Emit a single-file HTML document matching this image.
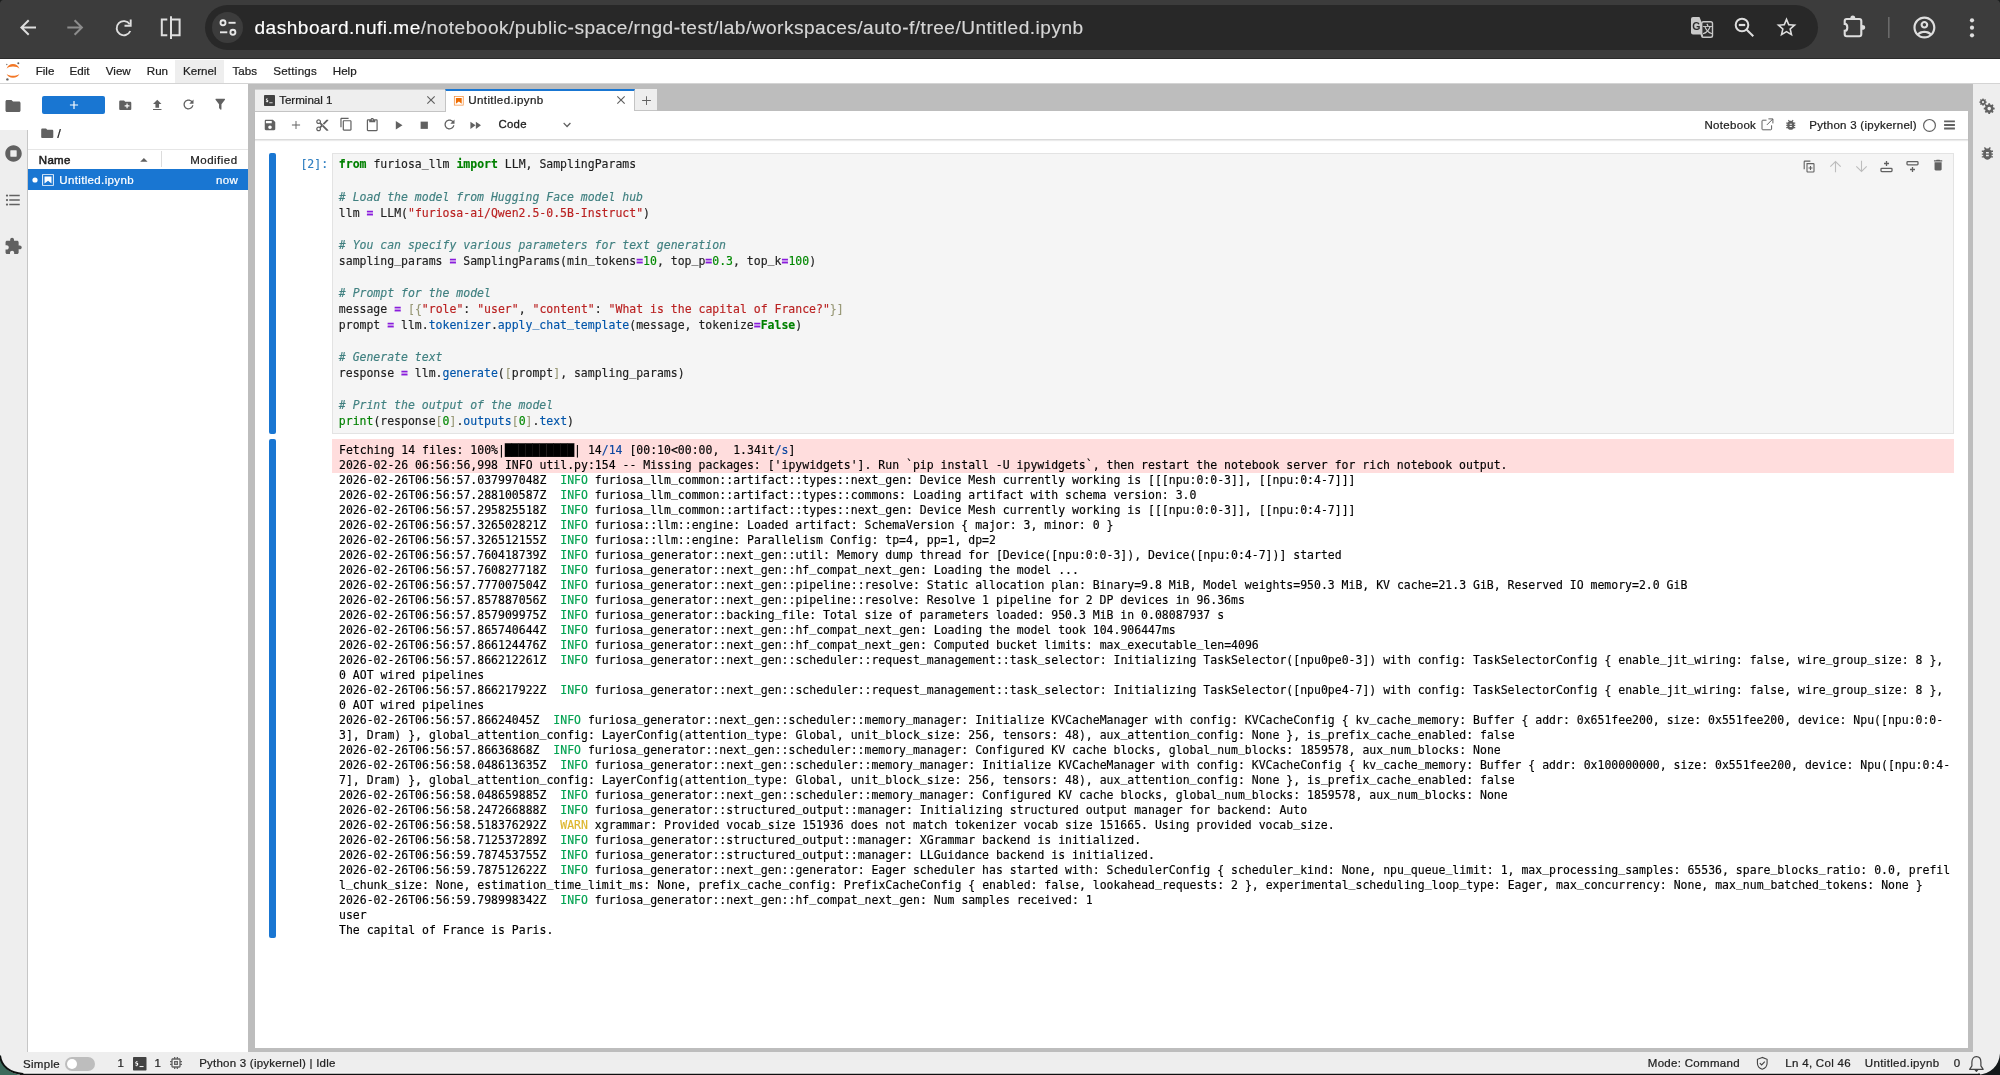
<!DOCTYPE html>
<html lang="en">
<head>
<meta charset="utf-8">
<title>Untitled.ipynb - JupyterLab</title>
<style>
*{box-sizing:border-box;margin:0;padding:0}
html,body{width:2000px;height:1075px;overflow:hidden;background:#fff}
body{position:relative;font-family:"Liberation Sans",sans-serif;font-size:11.5px;color:#212121}
#root{position:absolute;left:0;top:0;width:2000px;height:1075px;will-change:transform}
.abs{position:absolute}
svg{display:block;position:absolute;overflow:visible}
.t{position:absolute;white-space:nowrap;line-height:14px;-webkit-text-stroke:.22px}
/* chrome */
#chrome{left:0;top:0;width:2000px;height:58px;background:#3c3c3c}
#chromeline{left:0;top:58px;width:2000px;height:1px;background:#2b2b2b}
#pill{left:205px;top:5px;width:1613px;height:45px;border-radius:23px;background:#282828}
#site{left:212px;top:12px;width:31px;height:31px;border-radius:16px;background:#3c3c3c}
#url{left:254.5px;top:16px;font-size:19.1px;line-height:24px;color:#d6d6d6;letter-spacing:.48px}
#url b{font-weight:normal;color:#fff}
#url{-webkit-text-stroke:.15px}
/* menubar */
#menubar{left:0;top:59px;width:2000px;height:25px;background:#fff;border-bottom:1px solid #d4d4d4}
.mi{position:absolute;top:64px;font-size:11.6px;line-height:14px;color:#212121;white-space:nowrap;-webkit-text-stroke:.22px}
#kernelhl{left:175px;top:60px;width:49px;height:23px;background:#eee}
/* left sidebar */
#lsb{left:0;top:84px;width:28px;height:968px;background:#eee;border-right:1px solid #c6c6c6}
#lsbact{left:0;top:84px;width:28px;height:46px;background:#fff}
/* file browser */
#fb{left:28px;top:84px;width:220px;height:968px;background:#fff}
#newbtn{left:42px;top:96px;width:63px;height:18px;border-radius:2px;background:#1976d2}
#fbhead{left:28px;top:149px;width:220px;height:20px;border-top:1px solid #e6e6e6}
#fbdiv{left:161px;top:151px;width:1px;height:16px;background:#dcdcdc}
#fbsel{left:28px;top:169px;width:220px;height:21px;background:#1976d2}
/* dock */
#dock{left:248px;top:84px;width:1725px;height:968px;background:#bdbdbd}
#tab1{left:255px;top:89px;width:191px;height:23px;background:#eee;border:1px solid #c4c4c4;border-left:none;border-top-color:#cfcfcf}
#tab2{left:445px;top:89px;width:190px;height:22px;background:#fff;border-top:2px solid #1976d2;border-right:1px solid #c4c4c4;border-left:1px solid #c4c4c4}
#tabadd{left:635px;top:89px;width:22px;height:22px;background:#eee;border-bottom:1px solid #c4c4c4}
#nbpanel{left:255px;top:111px;width:1713px;height:937px;background:#fff}
#tab1under{left:255px;top:111px;width:190px;height:1px;background:#c4c4c4}
#nbtoolbar{left:255px;top:112px;width:1713px;height:28px;background:#fff;border-bottom:1px solid #dadada;box-shadow:0 1px 1px rgba(0,0,0,.08)}
/* right sidebar */
#rsb{left:1973px;top:84px;width:27px;height:968px;background:#eee}
/* status bar */
#status{left:0;top:1052px;width:2000px;height:23px;background:#eee}
/* cell */
.bar{position:absolute;left:269px;width:7px;background:#1976d2;border-radius:2px}
#editor{left:332px;top:153px;width:1622px;height:281px;background:#f5f5f5;border:1px solid #e3e3e3}
#stderr{left:332px;top:439px;width:1622px;height:34px;background:#fdd}
pre{font-family:"DejaVu Sans Mono","Liberation Mono",monospace;font-size:11.49px;-webkit-text-stroke:.15px;position:absolute;white-space:pre;color:#212121;margin:0}
#code{left:338.8px;top:156.4px;line-height:16.06px}
#out{left:339px;top:442.9px;line-height:15px;color:#000}
#prompt{left:300.4px;top:156.4px;line-height:16.06px;color:#307fc1}
.u{position:relative;top:-1.6px}
.k{color:#008000;font-weight:bold}.c{color:#408080;font-style:italic}.s{color:#ba2121}.n{color:#080}
.o{color:#8a1cdc;font-weight:bold}.p{color:#05a}.b{color:#997}.bi{color:#008000}
.gi{color:#00a250}.gw{color:#ddb62b}.lk{color:#0d47a1}
</style>
</head>
<body>
<div id="root">
<!-- ===== Browser chrome ===== -->
<div class="abs" id="chrome"></div>
<div class="abs" id="chromeline"></div>
<div class="abs" id="pill"></div>
<div class="abs" id="site"></div>
<div class="t" id="url"><b>dashboard.nufi.me</b>/notebook/public-space/rngd-test/lab/workspaces/auto-f/tree/Untitled.ipynb</div>
<svg id="chromesvg" style="left:0;top:0" width="2000" height="58" viewBox="0 0 2000 58">
<g fill="#dedede">
<!-- back -->
<path transform="translate(16 15.5)" d="M20 11H7.830l5.590-5.590L12 4l-8 8 8 8 1.410-1.410L7.830 13H20v-2z"/>
<!-- forward (dim) -->
<path transform="translate(63.3 15.500)" fill="#8d8d8d" d="M12 4l-1.410 1.410L16.170 11H4v2h12.170l-5.580 5.590L12 20l8-8z"/>
<!-- reload -->
<g fill="none" stroke="#dedede" stroke-width="1.900"><path d="M129.700 24.300A7.100 7.100 0 1 0 130.300 31"/><path d="M130.700 19.500V25.700H124.500"/></g>
<!-- star -->
<path transform="translate(1774.500 15.300)" d="M22 9.240l-7.190-.62L12 2 9.190 8.630 2 9.240l5.460 4.730L5.820 21 12 17.270 18.180 21l-1.630-7.030L22 9.240zM12 15.400l-3.760 2.270 1-4.280-3.320-2.880 4.380-.38L12 6.100l1.710 4.040 4.380.38-3.320 2.880 1 4.280L12 15.400z"/>
<!-- extensions puzzle -->
<path fill="none" stroke="#dedede" stroke-width="2.100" d="M1846.700 19H1859.300a2 2 0 0 1 2 2V34.200a2 2 0 0 1-2 2H1846.700a2 2 0 0 1-2-2V30.900a2.600 3.500 0 0 0 0-7V21a2 2 0 0 1 2-2z"/>
<path d="M1850.300 18.400a2.500 3 0 0 1 5 0zM1862 25a3.200 2.400 0 0 1 0 4.800z"/>
<!-- profile -->
<path transform="translate(1911.200 14.300) scale(1.1)" d="M12 2C6.480 2 2 6.480 2 12s4.480 10 10 10 10-4.480 10-10S17.520 2 12 2zM7.350 18.500C8.660 17.560 10.260 17 12 17s3.340.56 4.650 1.500C15.340 19.440 13.740 20 12 20s-3.340-.56-4.650-1.500zm10.790-1.380C16.450 15.800 14.320 15 12 15s-4.450.8-6.140 2.120C4.700 15.730 4 13.950 4 12c0-4.420 3.580-8 8-8s8 3.580 8 8c0 1.950-.7 3.730-1.860 5.120zM12 6c-1.930 0-3.500 1.570-3.500 3.500S10.070 13 12 13s3.500-1.570 3.500-3.500S13.930 6 12 6zm0 5c-.83 0-1.500-.67-1.500-1.500S11.170 8 12 8s1.500.67 1.500 1.500S12.830 11 12 11z"/>
<!-- dots -->
<circle cx="1972" cy="20.300" r="2.100"/><circle cx="1972" cy="27.700" r="2.100"/><circle cx="1972" cy="35.300" r="2.100"/>
</g>
<path d="M0 0h3.200C1.400.3.300 1.400 0 3.200z" fill="#1b1d1c"/><path d="M2000 0h-3.200c1.800.3 2.900 1.400 3.200 3.200z" fill="#1b1d1c"/>
<!-- separator -->
<rect x="1888" y="17" width="1.600" height="21" fill="#6a6a6a"/>
<!-- split view -->
<g fill="none" stroke="#dedede" stroke-width="2">
<path d="M167.300 19.600H161.800V35.200H167.300"/>
<path d="M171 19.600H179.600V35.200H171"/>
<path d="M171 16.200V39"/>
</g>
<!-- site info (tune) -->
<g fill="none" stroke="#e6e6e6" stroke-width="1.900">
<circle cx="223" cy="22.800" r="2.500"/><path d="M228.500 22.800H235.600"/>
<circle cx="232.900" cy="32.300" r="2.500"/><path d="M220 32.300H227.300"/>
</g>
<!-- zoom out -->
<g fill="none" stroke="#dedede" stroke-width="2">
<circle cx="1742" cy="25" r="6.300"/><path d="M1746.700 29.700L1753.300 36.300"/><path d="M1738.800 25H1745.200" stroke-width="2.200"/>
</g>
<!-- translate -->
<g>
<path d="M1693 17h6.500l2 5v12.500h-8.500a2 2 0 0 1-2-2V19a2 2 0 0 1 2-2z" fill="#c9c9c9"/>
<rect x="1701.700" y="21.700" width="10.800" height="15.600" rx="1.800" fill="#2f2f2f" stroke="#c9c9c9" stroke-width="1.400"/>
<path d="M1700 34.500l3 3.500v-3.500z" fill="#c9c9c9"/>
</g>
</svg>
<div class="t" style="left:1692.300px;top:19.800px;font-size:10.500px;line-height:13px;font-weight:bold;color:#2b2b2b;-webkit-text-stroke:0">G</div>
<div class="t" style="left:1702.500px;top:22.500px;font-size:10px;line-height:13px;color:#dedede;font-family:'Liberation Sans','Noto Sans CJK SC',sans-serif">文</div>


<!-- ===== Menu bar ===== -->
<div class="abs" id="menubar"></div>
<div class="abs" id="kernelhl"></div>
<div class="mi" style="left:35.700px">File</div>
<div class="mi" style="left:69.500px">Edit</div>
<div class="mi" style="left:105.800px">View</div>
<div class="mi" style="left:146.800px">Run</div>
<div class="mi" style="left:183px">Kernel</div>
<div class="mi" style="left:232.500px">Tabs</div>
<div class="mi" style="left:273.200px;letter-spacing:.25px">Settings</div>
<div class="mi" style="left:332.800px">Help</div>
<svg style="left:4px;top:61px" width="18" height="21" viewBox="0 0 18 21">
<path d="M2.600 7.700C3.400 4.800 6 3 9 3s5.600 1.800 6.400 4.700C14.200 6.300 11.800 5.500 9 5.500S3.800 6.300 2.600 7.700z" fill="#f37726"/>
<path d="M2.600 12.700C3.400 15.100 6 16.700 9 16.700s5.600-1.600 6.400-4C14.200 14 11.800 14.800 9 14.800S3.800 14 2.600 12.700z" fill="#f37726"/>
<circle cx="14.300" cy="2.300" r="1" fill="#616161"/><circle cx="2.800" cy="3.500" r=".7" fill="#767677"/><circle cx="3.400" cy="18.400" r="1.200" fill="#616161"/>
</svg>


<!-- ===== Left sidebar ===== -->
<div class="abs" id="lsb"></div>
<div class="abs" id="lsbact"></div>
<svg style="left:4px;top:96.500px" width="18" height="18" viewBox="0 0 24 24"><path fill="#616161" d="M10 4H4c-1.100 0-1.990.9-1.990 2L2 18c0 1.100.9 2 2 2h16c1.100 0 2-.9 2-2V8c0-1.100-.9-2-2-2h-8l-2-2z"/></svg>
<svg style="left:4.500px;top:145px" width="17" height="17" viewBox="0 0 512 512"><path fill="#616161" d="M256 8C119 8 8 119 8 256s111 248 248 248 248-111 248-248S393 8 256 8zm96 328c0 8.800-7.200 16-16 16H176c-8.800 0-16-7.200-16-16V176c0-8.800 7.200-16 16-16h160c8.800 0 16 7.200 16 16v160z"/></svg>
<svg style="left:4px;top:191px" width="18" height="18" viewBox="0 0 24 24"><path fill="#616161" d="M7,5H21V7H7V5M7,13V11H21V13H7M4,4.500A1.500,1.500 0 0,1 5.500,6A1.500,1.500 0 0,1 4,7.500A1.500,1.500 0 0,1 2.500,6A1.500,1.500 0 0,1 4,4.500M4,10.500A1.500,1.500 0 0,1 5.500,12A1.500,1.500 0 0,1 4,13.500A1.500,1.500 0 0,1 2.500,12A1.500,1.500 0 0,1 4,10.500M7,19V17H21V19H7M4,16.500A1.500,1.500 0 0,1 5.500,18A1.500,1.500 0 0,1 4,19.500A1.500,1.500 0 0,1 2.500,18A1.500,1.500 0 0,1 4,16.500Z"/></svg>
<svg style="left:3.500px;top:237px" width="18.500" height="18.500" viewBox="0 0 24 24"><path fill="#616161" d="M20.500 11H19V7c0-1.100-.9-2-2-2h-4V3.500C13 2.120 11.880 1 10.500 1S8 2.120 8 3.500V5H4c-1.100 0-1.990.9-1.990 2v3.800H3.500c1.490 0 2.700 1.210 2.700 2.700s-1.210 2.700-2.700 2.700H2V20c0 1.100.9 2 2 2h3.800v-1.500c0-1.490 1.210-2.700 2.700-2.700 1.490 0 2.700 1.210 2.700 2.700V22H17c1.100 0 2-.9 2-2v-4h1.500c1.380 0 2.500-1.120 2.500-2.500S21.880 11 20.500 11z"/></svg>


<!-- ===== File browser ===== -->
<div class="abs" id="fb"></div>
<div class="abs" id="newbtn"></div>
<div class="abs" id="fbhead"></div>
<div class="abs" id="fbdiv"></div>
<div class="abs" id="fbsel"></div>
<svg style="left:66.500px;top:98px" width="14" height="14" viewBox="0 0 24 24"><path fill="#fff" d="M19 13h-6v6h-2v-6H5v-2h6V5h2v6h6v2z"/></svg>
<svg style="left:117.500px;top:97.500px" width="14.500" height="14.500" viewBox="0 0 24 24"><path fill="#616161" d="M20 6h-8l-2-2H4c-1.110 0-1.990.89-1.990 2L2 18c0 1.110.89 2 2 2h16c1.110 0 2-.89 2-2V8c0-1.110-.89-2-2-2zm-1 8h-3v3h-2v-3h-3v-2h3V9h2v3h3v2z"/></svg>
<svg style="left:149.500px;top:97.500px" width="14.500" height="14.500" viewBox="0 0 24 24"><path fill="#616161" d="M9 16h6v-6h4l-7-7-7 7h4zm-4 2h14v2H5z"/></svg>
<svg style="left:181.200px;top:97px" width="15" height="15" viewBox="0 0 18 18"><path fill="#616161" d="M9 13.500c-2.490 0-4.500-2.010-4.500-4.500S6.510 4.500 9 4.500c1.240 0 2.360.52 3.170 1.330L10 8h5V3l-1.760 1.760C12.150 3.680 10.660 3 9 3 5.690 3 3.010 5.690 3.010 9S5.690 15 9 15c2.970 0 5.430-2.160 5.900-5h-1.520c-.46 2-2.240 3.500-4.380 3.500z"/></svg>
<svg style="left:213px;top:97.300px" width="14.500" height="14.500" viewBox="0 0 24 24"><path fill="#616161" d="M14,12V19.880C14.040,20.180 13.940,20.500 13.710,20.710C13.320,21.100 12.690,21.100 12.300,20.710L10.290,18.700C10.060,18.470 9.960,18.160 10,17.870V12H9.970L4.210,4.620C3.870,4.190 3.950,3.560 4.380,3.220C4.570,3.080 4.780,3 5,3V3H19V3C19.220,3 19.430,3.080 19.620,3.220C20.050,3.560 20.130,4.190 19.790,4.620L14.030,12H14Z"/></svg>
<svg style="left:40px;top:126px" width="14.500" height="14.500" viewBox="0 0 24 24"><path fill="#616161" d="M10 4H4c-1.100 0-1.990.9-1.990 2L2 18c0 1.100.9 2 2 2h16c1.100 0 2-.9 2-2V8c0-1.100-.9-2-2-2h-8l-2-2z"/></svg>
<div class="t" style="left:57.300px;top:127px;font-size:13px">/</div>
<div class="t" id="fbname" style="left:38.800px;top:152.500px;font-size:11.500px;letter-spacing:.28px;-webkit-text-stroke:.5px">Name</div>
<div class="t" id="fbmod" style="left:190.200px;top:152.500px;font-size:11.500px;letter-spacing:.5px">Modified</div>
<svg style="left:138px;top:155px" width="12" height="10" viewBox="0 0 12 10"><path fill="#616161" d="M2.200 6.700h7.400L5.900 2.900z"/></svg>
<svg style="left:31.600px;top:177px" width="6" height="6" viewBox="0 0 6 6"><circle cx="3" cy="3" r="2.600" fill="#fff"/></svg>
<svg style="left:40.500px;top:173px" width="14" height="14" viewBox="0 0 22 22"><g fill="#fff"><path d="M18.700 3.300v15.400H3.300V3.300h15.400m1.500-1.500H1.800v18.300h18.300l.1-18.300z"/><path d="M16.500 16.500l-5.400-4.300-5.600 4.300v-11h11z"/></g></svg>
<div class="t" id="fbfile" style="left:59.300px;top:172.800px;font-size:11.500px;color:#fff;letter-spacing:.35px">Untitled.ipynb</div>
<div class="t" id="fbnow" style="left:216px;top:172.800px;font-size:11.500px;color:#fff;letter-spacing:.3px">now</div>


<!-- ===== Dock / notebook ===== -->
<div class="abs" id="dock"></div>
<div class="abs" id="nbpanel"></div>
<div class="abs" id="tab1"></div>
<div class="abs" id="tab2"></div>
<div class="abs" id="tabadd"></div>
<div class="abs" id="nbtoolbar"></div>
<svg style="left:263.500px;top:95.300px" width="11" height="11" viewBox="0 0 11 11"><rect x="0" y="0" width="11" height="11" rx=".8" fill="#424242"/><path d="M2.600 3.200h1.100v.6h-.9v.9h.9c.3 0 .5.200.5.500v1.200c0 .3-.2.500-.5.500h-.3v.6h-.6v-.6h-.9v-.6h1.400v-.9h-.9c-.3 0-.5-.2-.5-.5V4.300c0-.3.200-.5.500-.5h.2z" fill="#fff"/><rect x="5.300" y="7.400" width="3.300" height=".8" fill="#fff"/></svg>
<div class="t" id="tabt1" style="left:279.200px;top:92.600px;font-size:11.600px;letter-spacing:-.03px">Terminal 1</div>
<svg style="left:423.900px;top:93.400px" width="14" height="14" viewBox="0 0 24 24"><path fill="#616161" d="M19 6.410L17.590 5 12 10.590 6.410 5 5 6.410 10.590 12 5 17.590 6.410 19 12 13.410 17.590 19 19 17.590 13.410 12z"/></svg>
<svg style="left:452.700px;top:95px" width="11.600" height="11.600" viewBox="0 0 22 22"><g fill="#ef6c00"><path opacity=".75" d="M18.700 3.300v15.400H3.300V3.300h15.400m1.500-1.500H1.800v18.300h18.300l.1-18.300z"/><path d="M16.500 16.500l-5.400-4.300-5.600 4.300v-11h11z"/></g></svg>
<div class="t" id="tabt2" style="left:468.300px;top:92.600px;font-size:11.600px;letter-spacing:.36px">Untitled.ipynb</div>
<svg style="left:614px;top:93.400px" width="14" height="14" viewBox="0 0 24 24"><path fill="#616161" d="M19 6.410L17.590 5 12 10.590 6.410 5 5 6.410 10.590 12 5 17.590 6.410 19 12 13.410 17.590 19 19 17.590 13.410 12z"/></svg>
<svg style="left:638.500px;top:92.900px" width="15" height="15" viewBox="0 0 24 24"><path fill="#616161" d="M19 12.750h-6.250V19h-1.500v-6.250H5v-1.500h6.250V5h1.500v6.250H19v1.500z"/></svg>

<svg style="left:263px;top:118px" width="14" height="14" viewBox="0 0 24 24"><path fill="#616161" d="M17 3H5c-1.110 0-2 .9-2 2v14c0 1.100.89 2 2 2h14c1.100 0 2-.9 2-2V7l-4-4zm-5 16c-1.660 0-3-1.340-3-3s1.340-3 3-3 3 1.340 3 3-1.340 3-3 3zm3-10H5V5h10v4z"/></svg>
<svg style="left:288.600px;top:118px" width="14" height="14" viewBox="0 0 24 24"><path fill="#616161" d="M19 12.800h-6.200V19h-1.600v-6.200H5v-1.600h6.200V5h1.600v6.200H19v1.600z"/></svg>
<svg style="left:314.500px;top:117.800px" width="14.500" height="14.500" viewBox="0 0 24 24"><path fill="#616161" d="M9.640 7.640c.23-.5.360-1.050.360-1.640 0-2.210-1.790-4-4-4S2 3.790 2 6s1.790 4 4 4c.59 0 1.140-.13 1.640-.36L10 12l-2.360 2.360C7.140 14.130 6.590 14 6 14c-2.210 0-4 1.790-4 4s1.790 4 4 4 4-1.790 4-4c0-.59-.13-1.140-.36-1.640L12 14l7 7h3v-1L9.640 7.640zM6 8c-1.100 0-2-.89-2-2s.9-2 2-2 2 .89 2 2-.9 2-2 2zm0 12c-1.100 0-2-.89-2-2s.9-2 2-2 2 .89 2 2-.9 2-2 2zm6-7.500c-.28 0-.5-.22-.5-.5s.22-.5.5-.5.500.22.500.5-.22.500-.5.500zM19 3l-6 6 2 2 7-7V3z"/></svg>
<svg style="left:339.400px;top:116.900px" width="14.500" height="14.500" viewBox="0 0 18 18"><path fill="#616161" d="M11.900,1H3.200C2.400,1,1.700,1.700,1.700,2.500v10.200h1.500V2.500h8.700V1z M14.100,3.900h-8c-0.800,0-1.500,0.700-1.500,1.500v10.200c0,0.800,0.700,1.500,1.500,1.500h8 c0.800,0,1.500-0.700,1.500-1.500V5.400C15.500,4.600,14.900,3.900,14.100,3.900z M14.100,15.500h-8V5.400h8V15.500z"/></svg>
<svg style="left:365.200px;top:118.100px" width="14.500" height="14.500" viewBox="0 0 24 24"><path fill="#616161" d="M19 2h-4.180C14.400.84 13.300 0 12 0c-1.300 0-2.400.84-2.820 2H5c-1.100 0-2 .9-2 2v16c0 1.100.9 2 2 2h14c1.100 0 2-.9 2-2V4c0-1.100-.9-2-2-2zm-7 0c.55 0 1 .45 1 1s-.45 1-1 1-1-.45-1-1 .45-1 1-1zm7 18H5V4h2v3h10V4h2v16z"/></svg>
<svg style="left:391px;top:117.800px" width="14.500" height="14.500" viewBox="0 0 24 24"><path fill="#616161" d="M8 5v14l11-7z"/></svg>
<svg style="left:416.500px;top:117.800px" width="14.500" height="14.500" viewBox="0 0 24 24"><path fill="#616161" d="M6 6h12v12H6z"/></svg>
<svg style="left:442px;top:117.300px" width="15" height="15" viewBox="0 0 18 18"><path fill="#616161" d="M9 13.500c-2.490 0-4.500-2.010-4.500-4.500S6.510 4.500 9 4.500c1.240 0 2.360.52 3.170 1.330L10 8h5V3l-1.760 1.760C12.150 3.680 10.660 3 9 3 5.690 3 3.010 5.690 3.010 9S5.690 15 9 15c2.970 0 5.430-2.160 5.900-5h-1.520c-.46 2-2.240 3.500-4.380 3.500z"/></svg>
<svg style="left:468px;top:117.800px" width="14.500" height="14.500" viewBox="0 0 24 24"><path fill="#616161" d="M4 18l8.500-6L4 6v12zm9-12v12l8.500-6L13 6z"/></svg>
<div class="t" id="tbcode" style="left:498.400px;top:117px;font-size:11.400px;letter-spacing:.3px;-webkit-text-stroke:.3px #212121">Code</div>
<svg style="left:560.400px;top:118px" width="14" height="14" viewBox="0 0 18 18"><path fill="#616161" d="M5.200,5.900L9,9.700l3.800-3.800l1.200,1.200l-4.900,5l-4.900-5L5.200,5.900z"/></svg>
<div class="t" id="tbnb" style="left:1704.500px;top:118.300px;font-size:11.500px;letter-spacing:.3px">Notebook</div>
<svg style="left:1760.500px;top:118px" width="13" height="13" viewBox="0 0 13 13"><g fill="none" stroke="#616161" stroke-width="1"><path d="M5.500 2.200H1.800c-.5 0-.8.300-.8.800v8c0 .5.300.8.800.8h8c.5 0 .8-.3.800-.8V7.300"/><path d="M7.400.9h4.500v4.500M11.700 1.100L5.900 6.900"/></g></svg>
<svg style="left:1784px;top:118px" width="13.500" height="13.500" viewBox="0 0 24 24"><path fill="#616161" d="M20 8h-2.810c-.45-.78-1.070-1.450-1.820-1.960L17 4.410 15.590 3l-2.170 2.170C12.960 5.060 12.490 5 12 5c-.49 0-.96.060-1.410.17L8.410 3 7 4.410l1.620 1.630C7.880 6.550 7.260 7.220 6.810 8H4v2h2.090c-.05.33-.09.66-.09 1v1H4v2h2v1c0 .34.040.67.090 1H4v2h2.810c1.040 1.790 2.970 3 5.190 3s4.150-1.210 5.190-3H20v-2h-2.090c.05-.33.090-.66.090-1v-1h2v-2h-2v-1c0-.34-.04-.67-.09-1H20V8zm-6 8h-4v-2h4v2zm0-4h-4v-2h4v2z"/></svg>
<div class="t" id="tbpy" style="left:1809.300px;top:118.300px;font-size:11.500px;letter-spacing:.27px">Python 3 (ipykernel)</div>
<svg style="left:1922px;top:118px" width="15" height="15" viewBox="0 0 15 15"><circle cx="7.500" cy="7.400" r="5.900" fill="none" stroke="#616161" stroke-width="1.200"/></svg>
<svg style="left:1944px;top:119px" width="12" height="12" viewBox="0 0 12 12"><path fill="#616161" d="M.1 1.500h10.800v1.800H.1zM.1 5.100h10.800v1.800H.1zM.1 8.600h10.800v1.800H.1z"/></svg>


<!-- ===== Cell ===== -->
<div class="bar" style="top:153px;height:281px"></div>
<div class="bar" style="top:439px;height:499px"></div>
<div class="abs" id="editor"></div>
<div class="abs" id="stderr"></div>
<svg style="left:1803px;top:159.500px" width="13" height="13" viewBox="0 0 13 13"><g fill="none" stroke="#616161" stroke-width="1.100"><path d="M1.200 9.300V1.800c0-.4.300-.7.700-.7h5.500"/><path d="M4 3.600h6.300c.4 0 .7.300.7.700v7c0 .4-.3.700-.7.700H4.700c-.4 0-.7-.3-.7-.7z"/><path d="M7.500 6v4M5.500 8h4"/></g></svg>
<svg style="left:1829px;top:159.500px" width="13" height="13" viewBox="0 0 13 13"><path fill="none" stroke="#bdbdbd" stroke-width="1.100" d="M6.500 12.300V1.500M1.300 6.700l5.200-5.200 5.200 5.200"/></svg>
<svg style="left:1854.800px;top:159.500px" width="13" height="13" viewBox="0 0 13 13"><path fill="none" stroke="#bdbdbd" stroke-width="1.100" d="M6.500.7v10.800M1.300 6.300l5.200 5.200 5.200-5.200"/></svg>
<svg style="left:1880px;top:159.500px" width="13" height="13" viewBox="0 0 13 13"><g fill="none" stroke="#616161" stroke-width="1.300"><rect x="1" y="8.300" width="11" height="3.300" rx=".8"/><path d="M6.500 1v5M4 3.500h5"/></g></svg>
<svg style="left:1905.500px;top:159.500px" width="13" height="13" viewBox="0 0 13 13"><g fill="none" stroke="#616161" stroke-width="1.300"><rect x="1" y="1.600" width="11" height="3.300" rx=".8"/><path d="M6.500 7v5M4 9.500h5"/></g></svg>
<svg style="left:1931.100px;top:158.400px" width="14.200" height="14.200" viewBox="0 0 24 24"><path fill="#616161" d="M6 19c0 1.100.9 2 2 2h8c1.100 0 2-.9 2-2V7H6v12zM19 4h-3.500l-1-1h-5l-1 1H5v2h14V4z"/></svg>
<pre id="prompt">[2]:</pre>
<pre id="code"><span class="k">from</span> furiosa<span class="u">_</span>llm <span class="k">import</span> LLM, SamplingParams

<span class="c"># Load the model from Hugging Face model hub</span>
llm <span class="o">=</span> LLM(<span class="s">"furiosa-ai/Qwen2.5-0.5B-Instruct"</span>)

<span class="c"># You can specify various parameters for text generation</span>
sampling<span class="u">_</span>params <span class="o">=</span> SamplingParams(min<span class="u">_</span>tokens<span class="o">=</span><span class="n">10</span>, top<span class="u">_</span>p<span class="o">=</span><span class="n">0.3</span>, top<span class="u">_</span>k<span class="o">=</span><span class="n">100</span>)

<span class="c"># Prompt for the model</span>
message <span class="o">=</span> <span class="b">[{</span><span class="s">"role"</span>: <span class="s">"user"</span>, <span class="s">"content"</span>: <span class="s">"What is the capital of France?"</span><span class="b">}]</span>
prompt <span class="o">=</span> llm.<span class="p">tokenizer</span>.<span class="p">apply<span class="u">_</span>chat<span class="u">_</span>template</span>(message, tokenize<span class="o">=</span><span class="k">False</span>)

<span class="c"># Generate text</span>
response <span class="o">=</span> llm.<span class="p">generate</span>(<span class="b">[</span>prompt<span class="b">]</span>, sampling<span class="u">_</span>params)

<span class="c"># Print the output of the model</span>
<span class="bi">print</span>(response<span class="b">[</span><span class="n">0</span><span class="b">]</span>.<span class="p">outputs</span><span class="b">[</span><span class="n">0</span><span class="b">]</span>.<span class="p">text</span>)</pre>
<pre id="out">Fetching 14 files: 100%|<span class="blk">██████████</span>| 14<span class="lk">/14</span> [00:10&lt;00:00,  1.34it<span class="lk">/s</span>]
2026-02-26 06:56:56,998 INFO util.py:154 -- Missing packages: ['ipywidgets']. Run `pip install -U ipywidgets`, then restart the notebook server for rich notebook output.
2026-02-26T06:56:57.037997048Z  <span class="gi">INFO</span> furiosa<span class="u">_</span>llm<span class="u">_</span>common::artifact::types::next<span class="u">_</span>gen: Device Mesh currently working is [[[npu:0:0-3]], [[npu:0:4-7]]]
2026-02-26T06:56:57.288100587Z  <span class="gi">INFO</span> furiosa<span class="u">_</span>llm<span class="u">_</span>common::artifact::types::commons: Loading artifact with schema version: 3.0
2026-02-26T06:56:57.295825518Z  <span class="gi">INFO</span> furiosa<span class="u">_</span>llm<span class="u">_</span>common::artifact::types::next<span class="u">_</span>gen: Device Mesh currently working is [[[npu:0:0-3]], [[npu:0:4-7]]]
2026-02-26T06:56:57.326502821Z  <span class="gi">INFO</span> furiosa::llm::engine: Loaded artifact: SchemaVersion { major: 3, minor: 0 }
2026-02-26T06:56:57.326512155Z  <span class="gi">INFO</span> furiosa::llm::engine: Parallelism Config: tp=4, pp=1, dp=2
2026-02-26T06:56:57.760418739Z  <span class="gi">INFO</span> furiosa<span class="u">_</span>generator::next<span class="u">_</span>gen::util: Memory dump thread for [Device([npu:0:0-3]), Device([npu:0:4-7])] started
2026-02-26T06:56:57.760827718Z  <span class="gi">INFO</span> furiosa<span class="u">_</span>generator::next<span class="u">_</span>gen::hf<span class="u">_</span>compat<span class="u">_</span>next<span class="u">_</span>gen: Loading the model ...
2026-02-26T06:56:57.777007504Z  <span class="gi">INFO</span> furiosa<span class="u">_</span>generator::next<span class="u">_</span>gen::pipeline::resolve: Static allocation plan: Binary=9.8 MiB, Model weights=950.3 MiB, KV cache=21.3 GiB, Reserved IO memory=2.0 GiB
2026-02-26T06:56:57.857887056Z  <span class="gi">INFO</span> furiosa<span class="u">_</span>generator::next<span class="u">_</span>gen::pipeline::resolve: Resolve 1 pipeline for 2 DP devices in 96.36ms
2026-02-26T06:56:57.857909975Z  <span class="gi">INFO</span> furiosa<span class="u">_</span>generator::backing<span class="u">_</span>file: Total size of parameters loaded: 950.3 MiB in 0.08087937 s
2026-02-26T06:56:57.865740644Z  <span class="gi">INFO</span> furiosa<span class="u">_</span>generator::next<span class="u">_</span>gen::hf<span class="u">_</span>compat<span class="u">_</span>next<span class="u">_</span>gen: Loading the model took 104.906447ms
2026-02-26T06:56:57.866124476Z  <span class="gi">INFO</span> furiosa<span class="u">_</span>generator::next<span class="u">_</span>gen::hf<span class="u">_</span>compat<span class="u">_</span>next<span class="u">_</span>gen: Computed bucket limits: max<span class="u">_</span>executable<span class="u">_</span>len=4096
2026-02-26T06:56:57.866212261Z  <span class="gi">INFO</span> furiosa<span class="u">_</span>generator::next<span class="u">_</span>gen::scheduler::request<span class="u">_</span>management::task<span class="u">_</span>selector: Initializing TaskSelector([npu0pe0-3]) with config: TaskSelectorConfig { enable<span class="u">_</span>jit<span class="u">_</span>wiring: false, wire<span class="u">_</span>group<span class="u">_</span>size: 8 },
0 AOT wired pipelines
2026-02-26T06:56:57.866217922Z  <span class="gi">INFO</span> furiosa<span class="u">_</span>generator::next<span class="u">_</span>gen::scheduler::request<span class="u">_</span>management::task<span class="u">_</span>selector: Initializing TaskSelector([npu0pe4-7]) with config: TaskSelectorConfig { enable<span class="u">_</span>jit<span class="u">_</span>wiring: false, wire<span class="u">_</span>group<span class="u">_</span>size: 8 },
0 AOT wired pipelines
2026-02-26T06:56:57.86624045Z  <span class="gi">INFO</span> furiosa<span class="u">_</span>generator::next<span class="u">_</span>gen::scheduler::memory<span class="u">_</span>manager: Initialize KVCacheManager with config: KVCacheConfig { kv<span class="u">_</span>cache<span class="u">_</span>memory: Buffer { addr: 0x651fee200, size: 0x551fee200, device: Npu([npu:0:0-
3], Dram) }, global<span class="u">_</span>attention<span class="u">_</span>config: LayerConfig(attention<span class="u">_</span>type: Global, unit<span class="u">_</span>block<span class="u">_</span>size: 256, tensors: 48), aux<span class="u">_</span>attention<span class="u">_</span>config: None }, is<span class="u">_</span>prefix<span class="u">_</span>cache<span class="u">_</span>enabled: false
2026-02-26T06:56:57.86636868Z  <span class="gi">INFO</span> furiosa<span class="u">_</span>generator::next<span class="u">_</span>gen::scheduler::memory<span class="u">_</span>manager: Configured KV cache blocks, global<span class="u">_</span>num<span class="u">_</span>blocks: 1859578, aux<span class="u">_</span>num<span class="u">_</span>blocks: None
2026-02-26T06:56:58.048613635Z  <span class="gi">INFO</span> furiosa<span class="u">_</span>generator::next<span class="u">_</span>gen::scheduler::memory<span class="u">_</span>manager: Initialize KVCacheManager with config: KVCacheConfig { kv<span class="u">_</span>cache<span class="u">_</span>memory: Buffer { addr: 0x100000000, size: 0x551fee200, device: Npu([npu:0:4-
7], Dram) }, global<span class="u">_</span>attention<span class="u">_</span>config: LayerConfig(attention<span class="u">_</span>type: Global, unit<span class="u">_</span>block<span class="u">_</span>size: 256, tensors: 48), aux<span class="u">_</span>attention<span class="u">_</span>config: None }, is<span class="u">_</span>prefix<span class="u">_</span>cache<span class="u">_</span>enabled: false
2026-02-26T06:56:58.048659885Z  <span class="gi">INFO</span> furiosa<span class="u">_</span>generator::next<span class="u">_</span>gen::scheduler::memory<span class="u">_</span>manager: Configured KV cache blocks, global<span class="u">_</span>num<span class="u">_</span>blocks: 1859578, aux<span class="u">_</span>num<span class="u">_</span>blocks: None
2026-02-26T06:56:58.247266888Z  <span class="gi">INFO</span> furiosa<span class="u">_</span>generator::structured<span class="u">_</span>output::manager: Initializing structured output manager for backend: Auto
2026-02-26T06:56:58.518376292Z  <span class="gw">WARN</span> xgrammar: Provided vocab<span class="u">_</span>size 151936 does not match tokenizer vocab size 151665. Using provided vocab<span class="u">_</span>size.
2026-02-26T06:56:58.712537289Z  <span class="gi">INFO</span> furiosa<span class="u">_</span>generator::structured<span class="u">_</span>output::manager: XGrammar backend is initialized.
2026-02-26T06:56:59.787453755Z  <span class="gi">INFO</span> furiosa<span class="u">_</span>generator::structured<span class="u">_</span>output::manager: LLGuidance backend is initialized.
2026-02-26T06:56:59.787512622Z  <span class="gi">INFO</span> furiosa<span class="u">_</span>generator::next<span class="u">_</span>gen::generator: Eager scheduler has started with: SchedulerConfig { scheduler<span class="u">_</span>kind: None, npu<span class="u">_</span>queue<span class="u">_</span>limit: 1, max<span class="u">_</span>processing<span class="u">_</span>samples: 65536, spare<span class="u">_</span>blocks<span class="u">_</span>ratio: 0.0, prefil
l<span class="u">_</span>chunk<span class="u">_</span>size: None, estimation<span class="u">_</span>time<span class="u">_</span>limit<span class="u">_</span>ms: None, prefix<span class="u">_</span>cache<span class="u">_</span>config: PrefixCacheConfig { enabled: false, lookahead<span class="u">_</span>requests: 2 }, experimental<span class="u">_</span>scheduling<span class="u">_</span>loop<span class="u">_</span>type: Eager, max<span class="u">_</span>concurrency: None, max<span class="u">_</span>num<span class="u">_</span>batched<span class="u">_</span>tokens: None }
2026-02-26T06:56:59.798998342Z  <span class="gi">INFO</span> furiosa<span class="u">_</span>generator::next<span class="u">_</span>gen::hf<span class="u">_</span>compat<span class="u">_</span>next<span class="u">_</span>gen: Num samples received: 1
user
The capital of France is Paris.</pre>


<!-- ===== Right sidebar ===== -->
<div class="abs" id="rsb"></div>
<svg style="left:1978px;top:96.400px" width="22" height="22" viewBox="0 0 22 22"><path fill="#616161" fill-rule="evenodd" d="M15.38 11.60L16.64 11.78L16.64 13.42L15.38 13.60L14.87 14.85L15.62 15.87L14.47 17.02L13.45 16.27L12.20 16.78L12.02 18.04L10.38 18.04L10.20 16.78L8.95 16.27L7.93 17.02L6.78 15.87L7.53 14.85L7.02 13.60L5.76 13.42L5.76 11.78L7.02 11.60L7.53 10.35L6.78 9.33L7.93 8.18L8.95 8.93L10.20 8.42L10.38 7.16L12.02 7.16L12.20 8.42L13.45 8.93L14.47 8.18L15.62 9.33L14.87 10.35ZM9.40 12.60a1.80 1.80 0 1 0 3.60 0a1.80 1.80 0 1 0 -3.60 0ZM7.82 5.42L8.66 5.55L8.66 6.65L7.82 6.78L7.47 7.62L7.98 8.30L7.20 9.08L6.52 8.57L5.68 8.92L5.55 9.76L4.45 9.76L4.32 8.92L3.48 8.57L2.80 9.08L2.02 8.30L2.53 7.62L2.18 6.78L1.34 6.65L1.34 5.55L2.18 5.42L2.53 4.58L2.02 3.90L2.80 3.12L3.48 3.63L4.32 3.28L4.45 2.44L5.55 2.44L5.68 3.28L6.52 3.63L7.20 3.12L7.98 3.90L7.47 4.58ZM3.90 6.10a1.10 1.10 0 1 0 2.20 0a1.10 1.10 0 1 0 -2.20 0Z"/></svg>
<svg style="left:1978.700px;top:145.300px" width="16.800" height="16.800" viewBox="0 0 24 24"><path fill="#616161" d="M20 8h-2.810c-.45-.78-1.070-1.450-1.820-1.960L17 4.410 15.590 3l-2.170 2.170C12.960 5.060 12.490 5 12 5c-.49 0-.96.060-1.410.17L8.410 3 7 4.410l1.620 1.630C7.880 6.550 7.260 7.220 6.810 8H4v2h2.090c-.05.33-.09.66-.09 1v1H4v2h2v1c0 .34.040.67.090 1H4v2h2.810c1.040 1.790 2.970 3 5.190 3s4.150-1.210 5.190-3H20v-2h-2.090c.05-.33.090-.66.090-1v-1h2v-2h-2v-1c0-.34-.04-.67-.09-1H20V8zm-6 8h-4v-2h4v2zm0-4h-4v-2h4v2z"/></svg>


<!-- ===== Status bar ===== -->
<div class="abs" id="status"></div>
<div class="t" id="stsimple" style="left:23px;top:1056.600px;font-size:11.500px;letter-spacing:.3px">Simple</div>
<div class="abs" style="left:64.500px;top:1056.500px;width:30px;height:14px;border-radius:7px;background:#bdbdbd"></div>
<div class="abs" style="left:66.500px;top:1058.500px;width:10px;height:10px;border-radius:5px;background:#fff"></div>
<div class="t" style="left:117.500px;top:1056.400px;font-size:11.500px">1</div>
<svg style="left:132.500px;top:1056.500px" width="13.500" height="13.500" viewBox="0 0 11 11"><rect x="0" y="0" width="11" height="11" rx=".6" fill="#424242"/><path d="M2.600 3.200h1.100v.6h-.9v.9h.9c.3 0 .5.200.5.500v1.200c0 .3-.2.500-.5.500h-.3v.6h-.6v-.6h-.9v-.6h1.400v-.9h-.9c-.3 0-.5-.2-.5-.5V4.300c0-.3.200-.5.500-.5h.2z" fill="#fff"/><rect x="5.300" y="7.400" width="3.300" height=".8" fill="#fff"/></svg>
<div class="t" style="left:154.500px;top:1056.400px;font-size:11.500px">1</div>
<svg style="left:167.600px;top:1055.200px" width="16" height="16" viewBox="0 0 24 24"><path fill="#616161" d="M15 9H9v6h6V9zm-2 4h-2v-2h2v2zm8-2V9h-2V7c0-1.100-.9-2-2-2h-2V3h-2v2h-2V3H9v2H7c-1.100 0-2 .9-2 2v2H3v2h2v2H3v2h2v2c0 1.100.9 2 2 2h2v2h2v-2h2v2h2v-2h2c1.100 0 2-.9 2-2v-2h2v-2h-2v-2h2zm-4 6H7V7h10v10z"/></svg>
<div class="t" id="stpy" style="left:199.200px;top:1056.400px;font-size:11.500px;letter-spacing:.23px">Python 3 (ipykernel) | Idle</div>
<div class="t" id="stmode" style="left:1647.800px;top:1056.400px;font-size:11.500px;letter-spacing:.3px">Mode: Command</div>
<svg style="left:1755px;top:1056px" width="14.500" height="14.500" viewBox="0 0 24 24"><g fill="none" stroke="#424242" stroke-width="1.800"><path d="M12 2.300L4 5.500v6c0 5 3.400 9 8 10.300 4.600-1.300 8-5.300 8-10.300v-6z"/><path d="M8 11.800l3 3 5.200-5.400"/></g></svg>
<div class="t" id="stln" style="left:1785.300px;top:1056.400px;font-size:11.500px;letter-spacing:.3px">Ln 4, Col 46</div>
<div class="t" id="stfile" style="left:1864.800px;top:1056.400px;font-size:11.500px;letter-spacing:.35px">Untitled.ipynb</div>
<div class="t" style="left:1953.700px;top:1056.400px;font-size:11.500px">0</div>
<svg style="left:1968px;top:1055px" width="17" height="18" viewBox="0 0 17 18"><g fill="none" stroke="#424242" stroke-width="1.200" stroke-linejoin="round"><path d="M8.400 1.700c-3 0-4.500 2.400-4.500 5.500v3.600l-2.300 3.500h13.600l-2.300-3.500V7.200c0-3.100-1.500-5.500-4.500-5.500z"/><path d="M6.900 14.500l1.500 1.800 1.500-1.800"/></g></svg>
<!-- window corners -->
<svg style="left:0;top:1050px" width="2000" height="25" viewBox="0 0 2000 25"><path d="M0 4.500v20.500h23C10 24.300 1 17 0 4.500z" fill="#3c6a5b"/><path d="M0 5.500C1.300 16.500 10 23.200 23 23.900" fill="none" stroke="#0c0f0e" stroke-width="2"/><path d="M2000 3.500v21.500h-23c14-1 22-9 23-21.500z" fill="#14181a"/><rect x="20" y="23.500" width="1960" height="1.500" fill="#101010"/><rect x="24" y="22.600" width="1954" height=".9" fill="#fafafa"/></svg>

</div>
</body>
</html>
